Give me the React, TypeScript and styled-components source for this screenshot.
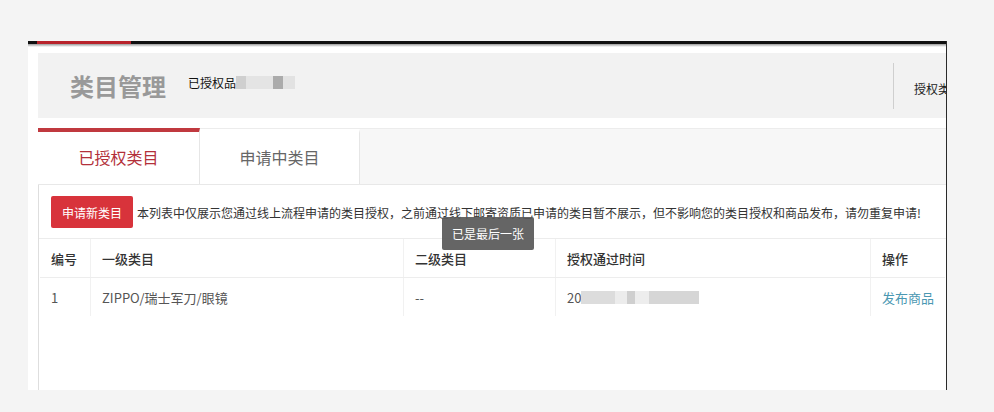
import React from "react";
import styled, { createGlobalStyle } from "styled-components";

const GlobalStyle = createGlobalStyle`
  html, body {
    margin: 0;
    padding: 0;
    background: #f4f4f4;
    font-family: "Noto Sans CJK SC", "Noto Sans", "Liberation Sans", sans-serif;
  }
`;

const Page = styled.div`
  padding: 41px 0 0 28px;
`;

const Panel = styled.div`
  width: 919px;
  height: 349px;
  background: #fff;
  border-right: 1px solid #2a2a2a;
  box-sizing: border-box;
  overflow: hidden;
  display: flex;
  flex-direction: column;
`;

const TopBar = styled.div`
  height: 3px;
  background: #111;
  display: flex;
  flex: none;
`;

const TopMark = styled.div`
  margin-left: 9px;
  width: 94px;
  background: #b8232b;
`;

const TopShade = styled.div`
  height: 3px;
  flex: none;
  background: linear-gradient(#9a9a9a, #fff);
`;

const Body = styled.div`
  flex: 1;
  display: flex;
  flex-direction: column;
  padding-left: 10px;
  padding-top: 6px;
`;

const Header = styled.div`
  width: 960px;
  height: 65px;
  flex: none;
  display: flex;
  align-items: center;
  background: #f2f2f2;
`;

const HeaderMain = styled.div`
  flex: 1;
  display: flex;
  align-items: center;
  padding-left: 32px;
`;

const Title = styled.h1`
  margin: 0;
  font-size: 24px;
  font-weight: 700;
  color: #999;
  letter-spacing: 0;
`;

const Scope = styled.span`
  margin-left: 22px;
  font-size: 12px;
  color: #111;
  display: flex;
  align-items: center;
  margin-top: -6px;
`;

const Redacted = styled.span`
  display: inline-flex;
  height: 13px;
  align-items: stretch;
`;

const Blot = styled.span<{ $w: number; $c: string }>`
  width: ${(p) => p.$w}px;
  background: ${(p) => p.$c};
`;

const HeaderSide = styled.div`
  width: 105px;
  flex: none;
  display: flex;
  align-items: center;
  align-self: stretch;
`;

const Divider = styled.div`
  width: 1px;
  height: 46px;
  background: #cfcfcf;
`;

const SideText = styled.span`
  margin-left: 20px;
  font-size: 12px;
  color: #222;
  white-space: nowrap;
  margin-top: 6px;
`;

const TabBar = styled.div`
  margin-top: 10px;
  height: 55px;
  flex: none;
  display: flex;
  background: #f7f7f7;
  border-top: 1px solid #ececec;
  border-bottom: 1px solid #e8e8e8;
`;

const Tab = styled.div<{ $active?: boolean; $width: number }>`
  width: ${(p) => p.$width}px;
  box-sizing: border-box;
  display: flex;
  align-items: center;
  justify-content: center;
  background: #fff;
  border-right: 1px solid #e6e6e6;
  border-top: 4px solid ${(p) => (p.$active ? "#c0393f" : "transparent")};
  margin-top: ${(p) => (p.$active ? "-1px" : "0")};
  padding-bottom: 3px;
  font-size: 16px;
  color: ${(p) => (p.$active ? "#b3303a" : "#666")};
`;

const Content = styled.div`
  position: relative;
  flex: 1;
  border-left: 1px solid #dedede;
`;

const Toolbar = styled.div`
  display: flex;
  align-items: center;
  padding: 11px 12px 10px;
  border-bottom: 1px solid #ececec;
`;

const PrimaryButton = styled.button`
  width: 82px;
  height: 32px;
  border: none;
  border-radius: 2px;
  background: #d8333b;
  color: #fff;
  font-family: inherit;
  font-size: 12px;
  padding: 0;
`;

const Note = styled.span`
  margin-left: 4px;
  font-size: 12px;
  color: #333;
  white-space: nowrap;
`;

const Table = styled.div`
  margin-left: 1px;
  width: 905px;
`;

const Row = styled.div<{ $head?: boolean }>`
  display: grid;
  grid-template-columns: 50px 313px 152px 315px 75px;
  height: 38px;
  border-bottom: 1px solid ${(p) => (p.$head ? "#ededed" : "transparent")};
  font-size: 13px;
  color: ${(p) => (p.$head ? "#333" : "#555")};
  font-weight: ${(p) => (p.$head ? 500 : 400)};
`;

const Cell = styled.div<{ $first?: boolean }>`
  display: flex;
  align-items: center;
  padding-left: 11px;
  border-left: ${(p) => (p.$first ? "none" : "1px solid #f1f1f1")};
  white-space: nowrap;
  overflow: hidden;
`;

const Link = styled.a`
  color: #4b98b2;
  text-decoration: none;
  cursor: pointer;
`;

const Toast = styled.div`
  position: absolute;
  left: 403px;
  top: 32px;
  width: 92px;
  height: 33px;
  display: flex;
  align-items: center;
  justify-content: center;
  border-radius: 2px;
  background: rgba(88, 88, 88, 0.92);
  color: #fff;
  font-size: 12px;
`;

const scopeBlots = [
  { w: 10, c: "#cfcfcf" },
  { w: 27, c: "#e4e4e4" },
  { w: 10, c: "#ababab" },
  { w: 12, c: "#e2e2e2" },
];

const dateBlots = [
  { w: 34, c: "#dcdcdc" },
  { w: 12, c: "#ececec" },
  { w: 8, c: "#cfcfcf" },
  { w: 14, c: "#ededed" },
  { w: 50, c: "#d6d6d6" },
];

const columns = ["编号", "一级类目", "二级类目", "授权通过时间", "操作"];

const App = () => {
  return (
    <Page>
      <GlobalStyle />
      <Panel>
        <TopBar>
          <TopMark />
        </TopBar>
        <TopShade />
        <Body>
          <Header>
            <HeaderMain>
              <Title>类目管理</Title>
              <Scope>
                已授权品
                <Redacted>
                  {scopeBlots.map((b, i) => (
                    <Blot key={i} $w={b.w} $c={b.c} />
                  ))}
                </Redacted>
              </Scope>
            </HeaderMain>
            <HeaderSide>
              <Divider />
              <SideText>授权类目</SideText>
            </HeaderSide>
          </Header>
          <TabBar>
            <Tab $active $width={162}>
              已授权类目
            </Tab>
            <Tab $width={160}>申请中类目</Tab>
          </TabBar>
          <Content>
            <Toolbar>
              <PrimaryButton>申请新类目</PrimaryButton>
              <Note>
                本列表中仅展示您通过线上流程申请的类目授权，之前通过线下邮寄资质已申请的类目暂不展示，但不影响您的类目授权和商品发布，请勿重复申请!
              </Note>
            </Toolbar>
            <Table>
              <Row $head>
                {columns.map((c, i) => (
                  <Cell key={c} $first={i === 0}>
                    {c}
                  </Cell>
                ))}
              </Row>
              <Row>
                <Cell $first>1</Cell>
                <Cell>ZIPPO/瑞士军刀/眼镜</Cell>
                <Cell>--</Cell>
                <Cell>
                  20
                  <Redacted>
                    {dateBlots.map((b, i) => (
                      <Blot key={i} $w={b.w} $c={b.c} />
                    ))}
                  </Redacted>
                </Cell>
                <Cell>
                  <Link>发布商品</Link>
                </Cell>
              </Row>
            </Table>
            <Toast>已是最后一张</Toast>
          </Content>
        </Body>
      </Panel>
    </Page>
  );
};

export default App;
